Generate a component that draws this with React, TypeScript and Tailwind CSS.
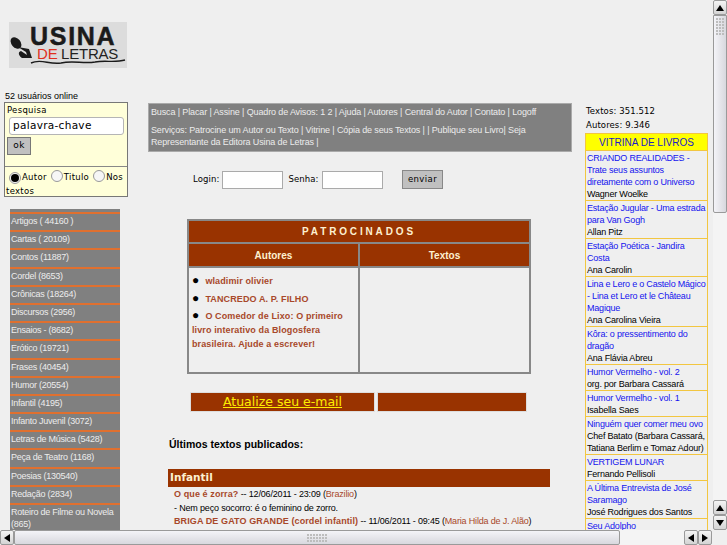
import React from 'react';

const categorias = [
  'Artigos ( 44160 )', 'Cartas ( 20109)', 'Contos (11887)', 'Cordel (8653)', 'Crônicas (18264)', 'Discursos (2956)',
  'Ensaios - (8682)', 'Erótico (19721)', 'Frases (40454)', 'Humor (20554)', 'Infantil (4195)', 'Infanto Juvenil (3072)',
  'Letras de Música (5428)', 'Peça de Teatro (1168)', 'Poesias (130540)', 'Redação (2834)', 'Roteiro de Filme ou Novela (865)',
];

const livros = [
  { titulo: 'CRIANDO REALIDADES - Trate seus assuntos diretamente com o Universo', autor: 'Wagner Woelke' },
  { titulo: 'Estação Jugular - Uma estrada para Van Gogh', autor: 'Allan Pitz' },
  { titulo: 'Estação Poética - Jandira Costa', autor: 'Ana Carolin' },
  { titulo: 'Lina e Lero e o Castelo Mágico - Lina et Lero et le Château Magique', autor: 'Ana Carolina Vieira' },
  { titulo: 'Kôra: o pressentimento do dragão', autor: 'Ana Flávia Abreu' },
  { titulo: 'Humor Vermelho - vol. 2', autor: 'org. por Barbara Cassará' },
  { titulo: 'Humor Vermelho - vol. 1', autor: 'Isabella Saes' },
  { titulo: 'Ninguém quer comer meu ovo', autor: 'Chef Batato (Barbara Cassará, Tatiana Berlim e Tomaz Adour)' },
  { titulo: 'VERTIGEM LUNAR', autor: 'Fernando Pellisoli' },
  { titulo: 'A Última Entrevista de José Saramago', autor: 'José Rodrigues dos Santos' },
  { titulo: 'Seu Adolpho', autor: '' },
];

const Seta = ({ dir }: { dir: 'up' | 'down' | 'left' | 'right' }) => {
  const pts = { up: '4,1 8,7 0,7', down: '0,1 8,1 4,7', left: '7,0 7,8 1,4', right: '1,0 1,8 7,4' }[dir];
  return (
    <svg width="8" height="8" viewBox="0 0 8 8">
      <polygon points={pts} fill="#000" />
    </svg>
  );
};

const BotaoBarra = ({ dir }: { dir: 'up' | 'down' | 'left' | 'right' }) => (
  <div className="flex h-[15px] w-[14px] shrink-0 items-center justify-center rounded-[2px] border border-[#9a9a9a] bg-gradient-to-b from-[#f4f4f4] to-[#d4d4d4]">
    <Seta dir={dir} />
  </div>
);

const Grip = ({ cols, rows }: { cols: number; rows: number }) => (
  <div className="flex flex-col gap-px">
    {Array.from({ length: rows }).map((_, r) => (
      <div key={r} className="flex gap-px">
        {Array.from({ length: cols }).map((_, c) => (
          <span key={c} className="h-[2px] w-[2px] bg-[#bdbdbd]" />
        ))}
      </div>
    ))}
  </div>
);

const Logo = () => (
  <div className="relative h-[46px] w-[118px] bg-[#dcdcdc] font-['Liberation_Sans',sans-serif]">
    <svg className="absolute inset-0" width="118" height="46" viewBox="0 0 118 46">
      <ellipse cx="7" cy="21" rx="4.5" ry="6.5" transform="rotate(-40 7 21)" fill="#1a1a1a" />
      <path d="M9 25 L20 27 L23 36 L13 36 C9 33 9 30 12 29 L18 33 L17 30 Z" fill="#1a1a1a" />
      <path d="M22 41 C32 36 40 43 52 41 C64 38 74 42 86 40 C96 38 106 41 116 38" stroke="#1a1a1a" strokeWidth="1.4" fill="none" />
    </svg>
    <span className="absolute left-[21px] top-[2px] text-[25px] font-bold leading-[25px] tracking-[1.7px] text-[#1a1a1a] [-webkit-text-stroke:0.5px_#1a1a1a]">USINA</span>
    <span className="absolute left-[28px] top-[24px] text-[15px] leading-[15px] text-[#e0301e]">DE</span>
    <span className="absolute left-[52px] top-[24px] text-[15px] leading-[15px] tracking-[-0.2px] text-[#222]">LETRAS</span>
  </div>
);

const Radio = ({ on }: { on?: boolean }) => (
  <span className="mx-px inline-flex h-[12px] w-[12px] items-center justify-center rounded-full border border-[#999] bg-[#f6f6f6] align-[-2px]">
    {on && <span className="h-[8px] w-[8px] rounded-full bg-black" />}
  </span>
);

const Esquerda = () => (
  <div className="w-[148px] shrink-0 pt-[22px] font-['Liberation_Sans',sans-serif]">
    <div className="pl-[9px]"><Logo /></div>
    <p className="mt-[22px] pl-[5px] text-[9px] leading-[12px] text-black">52 usuários online</p>
    <div className="ml-[4px] h-[95px] w-[124px] border border-[#777] bg-[#ffffd9] font-['DejaVu_Sans',sans-serif] text-[8.5px] tracking-[0.3px]">
      <p className="pl-[2px] pt-px leading-[12px]">Pesquisa</p>
      <div className="ml-[4px] mt-px flex h-[18px] w-[115px] items-center rounded-[3px] border border-[#b5b5b5] bg-white pl-[3px] text-[10.5px]">palavra-chave</div>
      <div className="ml-[2px] mt-[2px] flex h-[18px] w-[24px] items-center justify-center border border-[#777] bg-[#c0c0c0] text-[9px]">ok</div>
      <div className="mt-[11px] border-t border-[#888] pl-[1px] pr-0 pt-[3px] leading-[14px]">
        <span className="pl-[2px]"><Radio on /></span>Autor <Radio />Titulo <Radio />Nos textos
      </div>
    </div>
    <div className="ml-[10px] mt-[12px] w-[110px] bg-[#808080] pt-[3px] text-[9px] leading-[12px] tracking-[-0.25px] text-[#ececec]">
      {categorias.map(c => (
        <div key={c} className="min-h-[18.2px] border-t-2 border-[#e0702f] pl-px pt-[1px]">{c}</div>
      ))}
    </div>
  </div>
);

const Centro = () => (
  <div className="w-[437px] shrink-0 pt-[103px] font-['Liberation_Sans',sans-serif] text-[9px] text-black">
    <div className="h-[49px] w-[424px] border border-[#aaa] bg-[#808080] px-[2px] pt-[2px] leading-[12px] tracking-[-0.13px] text-[#ececec]">
      <p>Busca | Placar | Assine | Quadro de Avisos: 1 2 | Ajuda | Autores | Central do Autor | Contato | Logoff</p>
      <p className="mt-[6px]">Serviços: Patrocine um Autor ou Texto | Vitrine | Cópia de seus Textos | | Publique seu Livro| Seja Representante da Editora Usina de Letras |</p>
    </div>
    <div className="ml-[45px] mt-[18px] flex h-[19px] items-center font-['DejaVu_Sans',sans-serif] text-[8.5px] tracking-[0.1px]">
      <span className="mr-[3px]">Login:</span>
      <span className="h-[18px] w-[61px] border border-[#aaa] bg-white" />
      <span className="ml-[5px] mr-[3.5px]">Senha:</span>
      <span className="h-[18px] w-[61px] border border-[#aaa] bg-white" />
      <span className="ml-[19px] flex h-[19px] w-[41px] items-center justify-center border border-[#888] bg-[#c0c0c0] tracking-[0.4px]">enviar</span>
    </div>
    <div className="ml-[39px] mt-[30px] flex h-[155px] w-[344px] flex-col border-2 border-[#888] font-bold tracking-[0.12px]">
      <div className="flex h-[23px] items-center justify-center border-b-2 border-[#888] bg-[#993300] text-[10px] tracking-[2.85px] text-[#fdf0d0]">PATROCINADOS</div>
      <div className="flex flex-1 flex-col">
        <div className="flex h-[24px] border-b-2 border-[#888] text-[10px] tracking-normal text-[#fdf0d0]">
          <div className="flex w-[171px] items-center justify-center border-r-2 border-[#888] bg-[#993300]">Autores</div>
          <div className="flex flex-1 items-center justify-center bg-[#993300]">Textos</div>
        </div>
        <div className="flex flex-1">
          <div className="w-[171px] border-r-2 border-[#888] px-[3px] pt-[6px] leading-[13.7px] text-[#a8482a]">
            <p><span className="mr-[6px] text-[12px] leading-none text-black">●</span>wladimir olivier</p>
            <p className="mt-[3px]"><span className="mr-[6px] text-[12px] leading-none text-black">●</span>TANCREDO A. P. FILHO</p>
            <p className="mt-[3px]"><span className="mr-[6px] text-[12px] leading-none text-black">●</span>O Comedor de Lixo: O primeiro livro interativo da Blogosfera brasileira. Ajude a escrever!</p>
          </div>
          <div className="flex-1" />
        </div>
      </div>
    </div>
    <div className="ml-[42px] mt-[18px] flex h-[20px] gap-[2px]">
      <a className="flex w-[185px] items-center justify-center border border-[#ddd] bg-[#993300] font-['DejaVu_Sans',sans-serif] text-[12.5px] text-[#ffee00] underline">Atualize seu e-mail</a>
      <div className="w-[150px] border border-[#ddd] bg-[#993300]" />
    </div>
    <p className="ml-[21px] mt-[26px] text-[10.5px] font-bold leading-[13px]">Últimos textos publicados:</p>
    <div className="ml-[20px] mt-[18px] flex h-[18px] w-[382px] items-center bg-[#993300] pl-[2px] font-['DejaVu_Sans',sans-serif] text-[10.5px] font-bold text-[#fdf0d0]">Infantil</div>
    <div className="ml-[26px] mt-[1px] leading-[13.5px] tracking-[-0.17px]">
      <p><a className="font-bold tracking-[0.1px] text-[#a8482a]">O que é zorra?</a> -- 12/06/2011 - 23:09 (<a className="text-[#a8482a]">Brazilio</a>)</p>
      <p>- Nem peço socorro: é o feminino de zorro.</p>
      <p><a className="font-bold tracking-[0.1px] text-[#a8482a]">BRIGA DE GATO GRANDE (cordel infantil)</a> -- 11/06/2011 - 09:45 (<a className="text-[#a8482a]">Maria Hilda de J. Alão</a>)</p>
    </div>
  </div>
);

const Direita = () => (
  <div className="w-[123px] shrink-0 pt-[104px] font-['Liberation_Sans',sans-serif] text-[9px]">
    <p className="pl-px font-['DejaVu_Sans',sans-serif] text-[8.5px] leading-[14px] tracking-[0.1px] text-black">Textos: 351.512</p>
    <p className="pl-px font-['DejaVu_Sans',sans-serif] text-[8.5px] leading-[14px] tracking-[0.1px] text-black">Autores: 9.346</p>
    <div className="mt-px border border-[#f2c640]">
      <div className="flex h-[17px] items-center justify-center border-b border-[#f2c640] bg-[#ffff00] text-[10px] text-[#1a1ac8]">VITRINA DE LIVROS</div>
      {livros.map(l => (
        <div key={l.titulo} className="border-b border-[#f2c640] pl-px pt-px leading-[12px] tracking-[-0.2px]">
          <p className="text-[#1414ee]">{l.titulo}</p>
          <p className="text-black">{l.autor}</p>
        </div>
      ))}
    </div>
  </div>
);

const BarraVertical = () => (
  <div className="flex w-[14px] shrink-0 flex-col bg-[#f4f4f4]">
    <BotaoBarra dir="up" />
    <div className="flex h-[198px] items-center justify-center rounded-b-[2px] border border-[#9a9a9a] bg-gradient-to-r from-[#f4f4f8] to-[#d8d8de]">
      <div className="-mt-[175px]"><Grip cols={3} rows={6} /></div>
    </div>
    <div className="flex-1" />
    <BotaoBarra dir="up" />
    <BotaoBarra dir="down" />
  </div>
);

const BarraHorizontal = () => (
  <div className="flex h-[15px] shrink-0 bg-[#f4f4f4]">
    <BotaoBarra dir="left" />
    <div className="flex h-[15px] w-[606px] items-center justify-center rounded-[2px] border border-[#9a9a9a] bg-gradient-to-b from-[#f4f4f8] to-[#d8d8de]">
      <Grip cols={7} rows={3} />
    </div>
    <div className="flex-1" />
    <BotaoBarra dir="left" />
    <BotaoBarra dir="right" />
    <div className="w-[15px] bg-[#efefef]" />
  </div>
);

export default function App() {
  return (
    <div className="flex h-[545px] w-[727px] flex-col overflow-hidden bg-[#efefef]">
      <div className="flex min-h-0 flex-1">
        <div className="flex min-w-0 flex-1 overflow-hidden">
          <Esquerda />
          <Centro />
          <Direita />
        </div>
        <BarraVertical />
      </div>
      <BarraHorizontal />
    </div>
  );
}
